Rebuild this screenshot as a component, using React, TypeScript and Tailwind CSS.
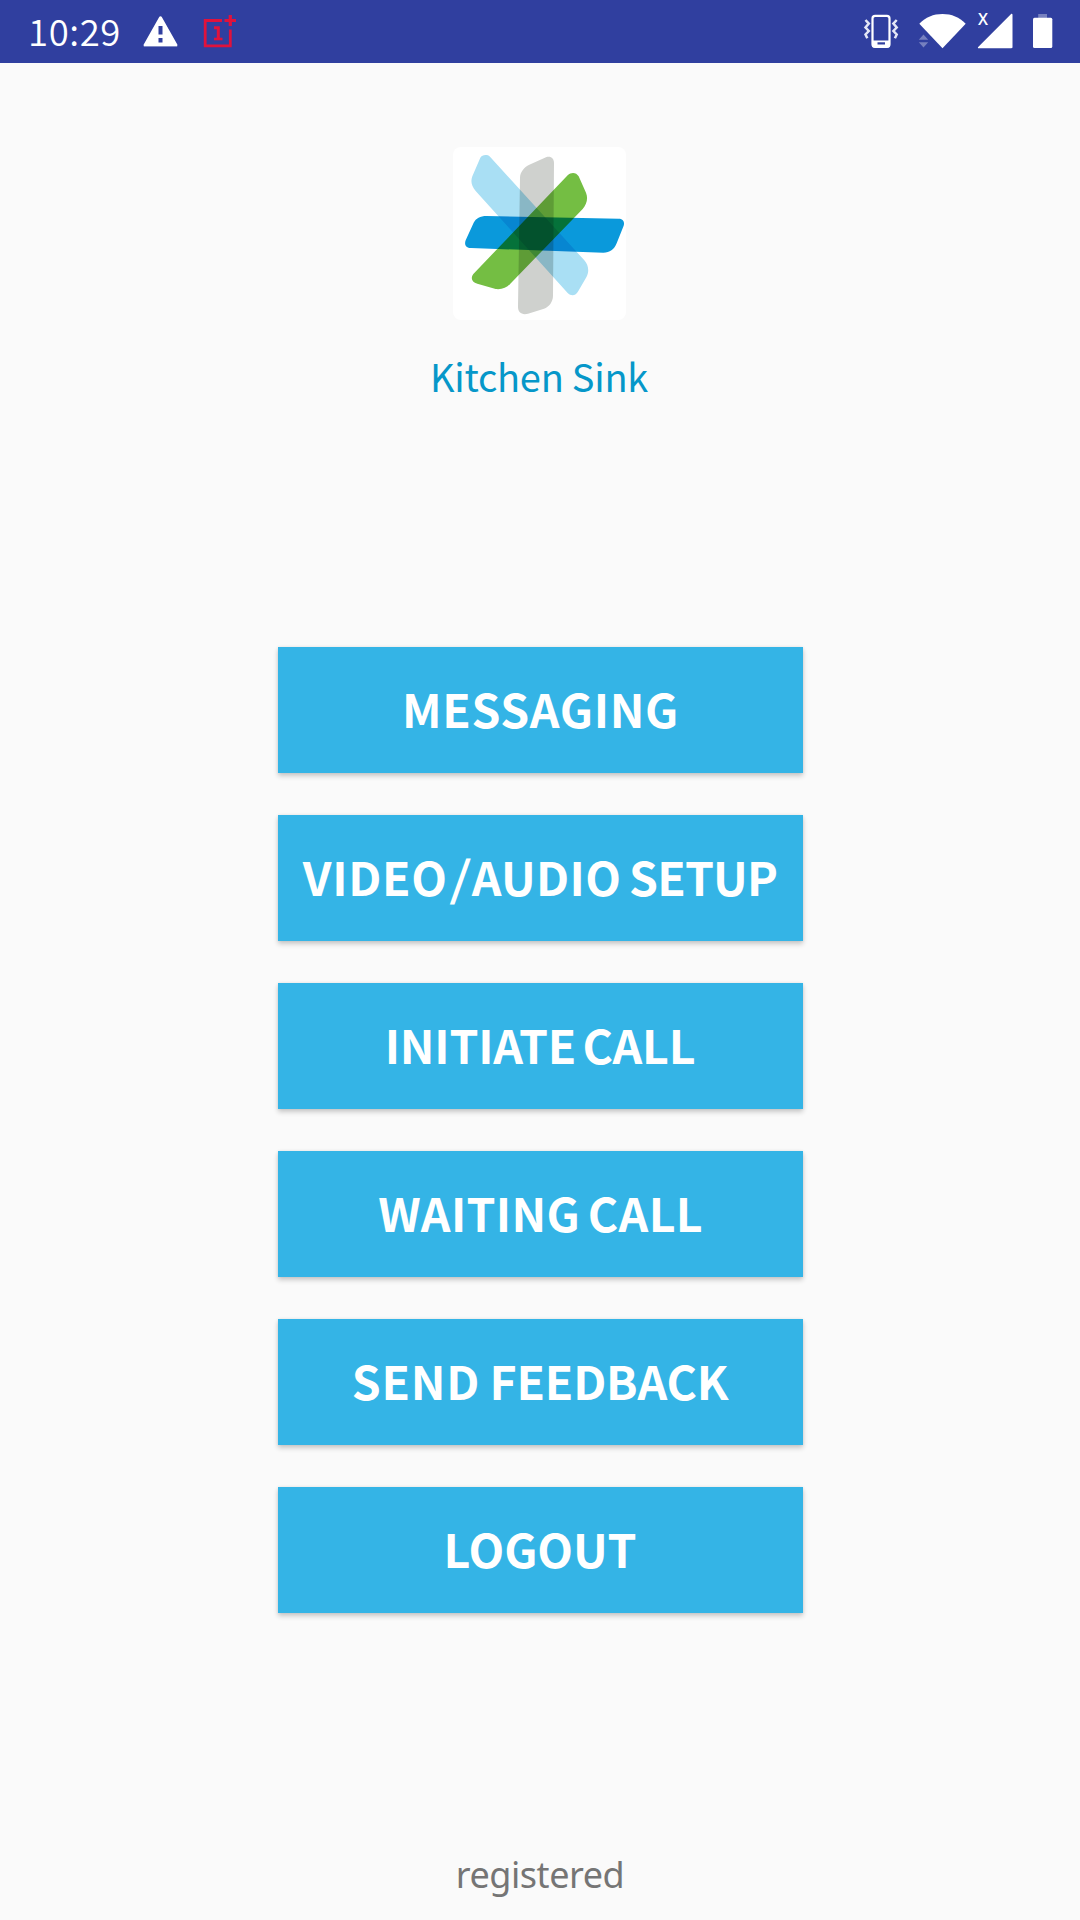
import React from "react";

type Word = { text: string; className: string };

const actions: Word[][] = [
  [{ text: "MESSAGING", className: "pl-[1px] tracking-[0.7px]" }],
  [
    { text: "VIDEO", className: "tracking-[0.7px]" },
    { text: "/", className: "ml-[4px] mr-[2px] inline-block -skew-x-6" },
    { text: "AUDIO ", className: "tracking-[0.3px] [word-spacing:-3px]" },
    { text: "SETUP", className: "tracking-[-0.8px]" },
  ],
  [{ text: "INITIATE CALL", className: "tracking-[-0.25px] [word-spacing:-4px]" }],
  [{ text: "WAITING CALL", className: "pl-[1px] tracking-[0.3px] [word-spacing:-3px]" }],
  [
    { text: "SEND ", className: "tracking-[0.8px] [word-spacing:-2px]" },
    { text: "FEEDBACK", className: "tracking-[-0.2px]" },
  ],
  [{ text: "LOGOUT", className: "tracking-[-0.1px]" }],
];

function WarningIcon() {
  return (
    <svg className="ml-[22px] h-[31px] w-[35px]" viewBox="0 0 35 31">
      <path d="M.8 30.6h33.4" stroke="#8b93c8" strokeWidth="1" />
      <path d="M17.5.2c.6 0 1 .3 1.300.8L34.300 28.500c.4.8 0 1.500-.8 1.500H1.500C.7 30 .3 29.300.7 28.500L16.200 1c.3-.5.7-.8 1.300-.8Z" fill="#fff" />
      <path d="M15.500 10h4v8.500h-4zM15.500 22h4v4.500h-4z" fill="#303f9f" />
    </svg>
  );
}

function OnePlusIcon() {
  return (
    <svg className="ml-[24px] h-[33px] w-[34px]" viewBox="0 0 34 33" fill="none" stroke="#e0123c">
      <path d="M20 5.500H3.200V30.800H28.300V14.500" strokeWidth="2.800" />
      <path d="M28.300 0v11M22.500 5.500h11.500" strokeWidth="3.200" />
      <path d="M12 12.700h4.300v11" strokeWidth="3" />
      <path d="M12 24h8.500" strokeWidth="2.600" />
    </svg>
  );
}

function VibrateIcon() {
  return (
    <svg className="h-[36px] w-[36px]" viewBox="0 0 36 36" fill="none">
      <rect x="9.500" y="2.800" width="17" height="31" rx="2.600" stroke="#fff" strokeWidth="2.200" />
      <path d="M9 27.500h18v5a2 2 0 0 1-2 2h-14a2 2 0 0 1-2-2z" fill="#fff" />
      <path d="M14.500 30.400h7.500" stroke="#303f9f" strokeWidth="2.200" />
      <path d="m2.500 7 3.300 3.600-3.300 3.900L5.800 18l-3.300 3.500 1.800 3.800M33.700 7l-3.300 3.600 3.300 3.900-3.300 3.500 3.300 3.500-1.800 3.800" stroke="#e4e7f6" strokeWidth="2.500" />
    </svg>
  );
}

function WifiIcon() {
  return (
    <svg className="ml-[18px] h-[36px] w-[50px]" viewBox="0 0 50 36">
      <path d="M2.300 10.700C8.500 4 16.500.9 25.500.9S42.500 4 48.700 10.700L25.500 35.200Z" fill="#fff" />
      <path d="m6.500 21.500 4.700 5.200H1.800zM6.500 34.500l4.700-5.200H1.800z" fill="#7680bf" />
    </svg>
  );
}

function SignalIcon() {
  return (
    <div className="relative ml-[10px] h-[36px] w-[36px]">
      <svg className="h-[36px] w-[36px]" viewBox="0 0 36 36">
        <path d="M35.500 1.700c0-1-.8-1.300-1.400-.6L1.200 34c-.6.7-.3 1.300.6 1.300h32.500c.8 0 1.200-.4 1.200-1.200Z" fill="#fff" />
      </svg>
      <span className="absolute top-0 left-[1px] font-['Open_Sans',sans-serif] text-[16px] leading-[13px] font-semibold">X</span>
    </div>
  );
}

function BatteryIcon() {
  return (
    <svg className="ml-[19px] h-[36px] w-[22px]" viewBox="0 0 22 36">
      <path d="M6.200 1h8.800v4H6.200z" fill="#7680bf" />
      <rect x="1" y="4.800" width="19.300" height="30.200" rx="1.500" fill="#fff" />
    </svg>
  );
}

function StatusBar() {
  return (
    <header className="flex h-[63px] items-center bg-[#303f9f] pl-[28px] pr-[26px] text-white">
      <span className="w-[93px] pb-[1px] font-['Noto_Sans_CJK_SC',sans-serif] text-[36.5px] leading-[60px] font-[350] tracking-[0.6px] whitespace-nowrap">10:29</span>
      <WarningIcon />
      <OnePlusIcon />
      <div className="mb-[1px] ml-auto flex items-center">
        <VibrateIcon />
        <WifiIcon />
        <SignalIcon />
        <BatteryIcon />
      </div>
    </header>
  );
}

function Logo() {
  return (
    <div className="isolate mr-[2px] h-[173px] w-[173px] overflow-hidden rounded-[8px] bg-white">
      <svg className="h-full w-full" viewBox="39 36 519 519">
        <g className="[&>path]:mix-blend-multiply">
          <path fill="#cfd1ce" d="M240 128C240 112 252 96 268 89L318 67C332 62 342 70 342 84L339 482C339 500 327 516 312 521L264 536C246 541 234 532 234 516Z" />
          <path fill="#a9dff4" d="M121 68C126 60 140 57 150 65L433 376C445 389 449 410 439 427L415 468C408 482 394 485 383 474L107 168C95 154 91 140 97 124Z" />
          <path fill="#0a99db" d="M101 263C108 250 120 243 140 243L536 251C548 251 555 260 551 272L530 325C522 344 510 353 490 353L93 339C78 339 72 329 77 316Z" />
          <path fill="#74be43" d="M383 121C394 110 409 112 416 124L438 173C445 190 440 209 428 222L211 446C200 458 186 464 167 462L112 446C95 441 91 428 100 417Z" />
        </g>
      </svg>
    </div>
  );
}

export default function App() {
  return (
    <div className="flex h-[1920px] w-[1080px] flex-col bg-[#fafafa]">
      <StatusBar />
      <main className="flex flex-1 flex-col items-center pt-[84px]">
        <Logo />
        <h1 className="mt-[28px] mr-[2px] font-['Noto_Sans_CJK_SC',sans-serif] text-[38px] leading-[56px] font-normal tracking-[-0.25px] text-[#0697c9]">Kitchen Sink</h1>
        <nav className="mt-[243px] flex flex-col gap-[42px]">
          {actions.map((words) => (
            <button
              key={words[0].text}
              className="h-[126px] w-[525px] bg-[#34b4e6] pb-[4px] text-center font-['Noto_Sans_CJK_SC',sans-serif] text-[46.4px] leading-[122px] font-bold whitespace-nowrap text-white shadow-[0_3px_5px_rgba(0,0,0,0.2),0_0_3px_rgba(0,0,0,0.08)]"
            >
              {words.map(({ text, className }) => (
                <span key={text} className={className}>
                  {text}
                </span>
              ))}
            </button>
          ))}
        </nav>
      </main>
      <footer className="mb-[20px] text-center font-['Noto_Sans',sans-serif] text-[36px] leading-[50px] tracking-[-0.45px] text-[#757575]">registered</footer>
    </div>
  );
}
